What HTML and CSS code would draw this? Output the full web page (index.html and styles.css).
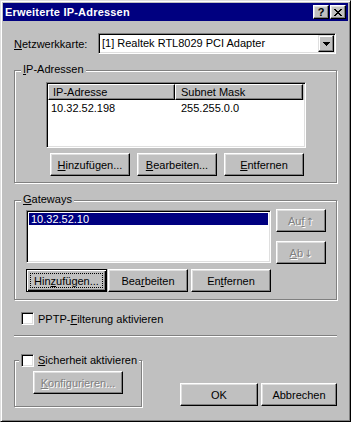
FILE: index.html
```html
<!DOCTYPE html>
<html lang="de">
<head>
<meta charset="utf-8">
<title>Erweiterte IP-Adressen</title>
<link rel="stylesheet" href="styles.css">
</head>
<body>
<div class="window">
  <div class="titlebar">
    <span class="title">Erweiterte IP-Adressen</span>
    <div class="tbtns">
      <span class="tbtn help">?</span>
      <span class="tbtn close"><svg width="8" height="7" viewBox="0 0 8 7" shape-rendering="crispEdges"><path d="M0 0h2v1H0zM6 0h2v1H6zM1 1h2v1H1zM5 1h2v1H5zM2 2h4v1H2zM3 3h2v1H3zM2 4h4v1H2zM1 5h2v1H1zM5 5h2v1H5zM0 6h2v1H0zM6 6h2v1H6z"/></svg></span>
    </div>
  </div>

  <div class="content">
    <div class="nic-row">
      <span class="lbl"><u>N</u>etzwerkkarte:</span>
      <div class="combo">
        <span class="val">[1] Realtek RTL8029 PCI Adapter</span>
        <span class="drop"><svg width="7" height="4" viewBox="0 0 7 4" shape-rendering="crispEdges"><path d="M0 0h7v1H0zM1 1h5v1H1zM2 2h3v1H2zM3 3h1v1H3z"/></svg></span>
      </div>
    </div>

    <div class="group g-ip">
      <span class="legend"><u>I</u>P-Adressen</span>
      <div class="listview">
        <div class="lv-head">
          <span class="hcell c1">IP-Adresse</span>
          <span class="hcell c2">Subnet Mask</span>
          <span class="hfill"></span>
        </div>
        <div class="lv-row">
          <span class="dcell c1">10.32.52.198</span>
          <span class="dcell c2">255.255.0.0</span>
        </div>
      </div>
      <div class="btnrow r1">
        <span class="btn w80"><span><u>H</u>inzufügen...</span></span>
        <span class="btn w80"><span><u>B</u>earbeiten...</span></span>
        <span class="btn w80"><span><u>E</u>ntfernen</span></span>
      </div>
    </div>

    <div class="group g-gw">
      <span class="legend"><u>G</u>ateways</span>
      <div class="gw-body">
        <div class="gw-left">
          <div class="listbox">
            <div class="lb-item sel">10.32.52.10</div>
          </div>
          <div class="btnrow r2">
            <span class="btn default w81"><span>Hin<u>z</u>ufügen...</span></span>
            <span class="btn w80 b-edit"><span>Bea<u>r</u>beiten</span></span>
            <span class="btn w80 b-del"><span>En<u>t</u>fernen</span></span>
          </div>
        </div>
        <div class="gw-right">
          <span class="btn w50 disabled"><span>Au<u>f</u><span class="arrow">↑</span></span></span>
          <span class="btn w50 disabled b-down"><span><u>A</u>b<span class="arrow">↓</span></span></span>
        </div>
      </div>
    </div>

    <div class="chk-row pptp">
      <span class="chk"></span>
      <span class="chk-lbl">PPTP-<u>F</u>ilterung aktivieren</span>
    </div>

    <div class="sep"></div>

    <div class="bottom-row">
      <div class="group g-sec">
        <span class="legend chk-legend"><span class="chk"></span><span class="chk-lbl"><u>S</u>icherheit aktivieren</span></span>
        <span class="btn w90 disabled"><span><u>K</u>onfigurieren...</span></span>
      </div>
      <div class="dlg-btns">
        <span class="btn ok"><span>OK</span></span>
        <span class="btn cancel"><span>Abbrechen</span></span>
      </div>
    </div>
  </div>
</div>
</body>
</html>
```

FILE: styles.css
```css
* { box-sizing: border-box; }
html, body { margin: 0; padding: 0; }
body {
  font-family: "Liberation Sans", Arial, sans-serif;
  font-size: 11px;
  color: #000;
  background: #c0c0c0;
}
u { text-decoration: underline; text-underline-offset: 1px; }

.window {
  width: 351px;
  height: 422px;
  background: #c0c0c0;
  border: 1px solid;
  border-color: #dfdfdf #000 #000 #dfdfdf;
  box-shadow: inset 1px 1px #fff, inset -1px -1px #808080;
  padding: 2px;
}

.titlebar {
  height: 18px;
  background: #000080;
  display: flex;
  align-items: center;
  padding-left: 2px;
  padding-right: 2px;
}
.title {
  color: #fff;
  font-weight: bold;
  font-size: 11px;
  letter-spacing: 0.2px;
}
.tbtns { margin-left: auto; display: flex; gap: 1px; }
.tbtn {
  width: 16px;
  height: 14px;
  background: #c0c0c0;
  border: 1px solid;
  border-color: #fff #000 #000 #fff;
  box-shadow: inset -1px -1px #808080, inset 1px 1px #dfdfdf;
  display: flex;
  align-items: center;
  justify-content: center;
}
.tbtn.help { font-weight: bold; font-size: 11px; line-height: 12px; }
.tbtn svg { display: block; fill: #000; }

.content { padding: 0 11px; }

.nic-row {
  margin-top: 12px;
  height: 21px;
  display: grid;
  grid-template-columns: 84px 238px;
  align-items: center;
}
.combo {
  height: 21px;
  background: #fff;
  border: 1px solid;
  border-color: #808080 #fff #fff #808080;
  box-shadow: inset 1px 1px #000, inset -1px -1px #dfdfdf;
  padding: 1px;
  display: flex;
  align-items: center;
}
.combo .val { flex: 1; padding-left: 2px; line-height: 17px; white-space: nowrap; }
.drop {
  width: 16px;
  height: 17px;
  background: #c0c0c0;
  border: 1px solid;
  border-color: #dfdfdf #000 #000 #dfdfdf;
  box-shadow: inset -1px -1px #808080, inset 1px 1px #fff;
  display: flex;
  align-items: center;
  justify-content: center;
}
.drop svg { display: block; fill: #000; }

.group {
  position: relative;
  border: 1px solid #808080;
  box-shadow: inset 1px 1px #fff, 1px 1px #fff;
}
.legend {
  position: absolute;
  top: -8px;
  left: 6px;
  padding: 0 2px;
  background: #c0c0c0;
  line-height: 13px;
  white-space: nowrap;
}

.g-ip {
  margin-top: 16px;
  width: 323px;
  height: 113px;
  padding: 11px 0 0 31px;
}
.listview {
  width: 260px;
  height: 66px;
  background: #fff;
  border: 1px solid;
  border-color: #808080 #fff #fff #808080;
  box-shadow: inset 1px 1px #000, inset -1px -1px #dfdfdf;
  padding: 1px;
}
.lv-head { display: flex; height: 16px; background: #c0c0c0; }
.hcell {
  height: 16px;
  line-height: 14px;
  background: #c0c0c0;
  border: 1px solid;
  border-color: #fff #000 #000 #fff;
  box-shadow: inset -1px -1px #808080;
  white-space: nowrap;
}
.hcell.c1 { width: 127px; padding-left: 4px; }
.hcell.c2 { width: 128px; padding-left: 5px; }
.hfill { flex: 1; }
.lv-row { display: flex; height: 14px; line-height: 14px; margin-top: 1px; }
.dcell.c1 { width: 127px; padding-left: 3px; }
.dcell.c2 { width: 128px; padding-left: 6px; }

.btn {
  position: relative;
  height: 23px;
  background: #c0c0c0;
  border: 1px solid;
  border-color: #fff #000 #000 #fff;
  box-shadow: inset -1px -1px #808080, inset 1px 1px #dfdfdf;
  display: flex;
  align-items: center;
  justify-content: center;
  padding-top: 1px;
  white-space: nowrap;
}
.btn.disabled { color: #808080; text-shadow: 1px 1px 0 #fff; }
.arrow { font-family: "DejaVu Sans", sans-serif; font-size: 10px; margin-left: 1px; }
.w80 { width: 80px; }
.w81 { width: 81px; }
.w50 { width: 50px; }
.w90 { width: 90px; }

.btnrow { display: flex; }
.btnrow.r1 { margin-top: 5px; margin-left: 4px; gap: 7px; }
.btnrow.r2 { margin-top: 6px; }
.b-edit { margin-left: 1px; }
.b-del { margin-left: 3px; }

.btn.default {
  border: 1px solid #000;
  box-shadow: inset 1px 1px #fff, inset -1px -1px #000, inset -2px -2px #808080;
}
.btn.default::after {
  content: "";
  position: absolute;
  left: 3px;
  top: 3px;
  right: 3px;
  bottom: 3px;
  border: 1px dotted #000;
}

.g-gw {
  margin-top: 17px;
  width: 323px;
  height: 100px;
  padding: 9px 0 0 11px;
}
.gw-body { display: flex; }
.listbox {
  width: 245px;
  height: 53px;
  background: #fff;
  border: 1px solid;
  border-color: #808080 #fff #fff #808080;
  box-shadow: inset 1px 1px #000, inset -1px -1px #dfdfdf;
  padding: 2px 2px;
}
.lb-item { height: 12px; line-height: 12px; padding-left: 2px; white-space: nowrap; }
.lb-item.sel { background: #000080; color: #fff; }
.gw-right { margin-left: 5px; margin-top: -1px; display: flex; flex-direction: column; }
.b-down { margin-top: 9px; }

.chk-row { display: flex; align-items: center; }
.pptp { margin-top: 12px; padding-left: 7px; height: 13px; }
.chk {
  display: inline-block;
  width: 13px;
  height: 13px;
  background: #fff;
  border: 1px solid;
  border-color: #808080 #fff #fff #808080;
  box-shadow: inset 1px 1px #000, inset -1px -1px #dfdfdf;
  flex: none;
}
.chk-lbl { margin-left: 4px; white-space: nowrap; }

.sep {
  margin-top: 10px;
  height: 2px;
  border-top: 1px solid #808080;
  border-bottom: 1px solid #fff;
}

.bottom-row { display: flex; align-items: flex-start; margin-top: 23px; }
.g-sec {
  width: 130px;
  height: 47px;
  padding: 10px 0 0 18px;
}
.chk-legend {
  display: flex;
  align-items: center;
  left: 4px;
  top: -8px;
  height: 14px;
  padding: 0 2px;
}
.dlg-btns { display: flex; margin-top: 23px; margin-left: 38px; }
.ok { width: 78px; }
.cancel { width: 76px; margin-left: 3px; }
```
